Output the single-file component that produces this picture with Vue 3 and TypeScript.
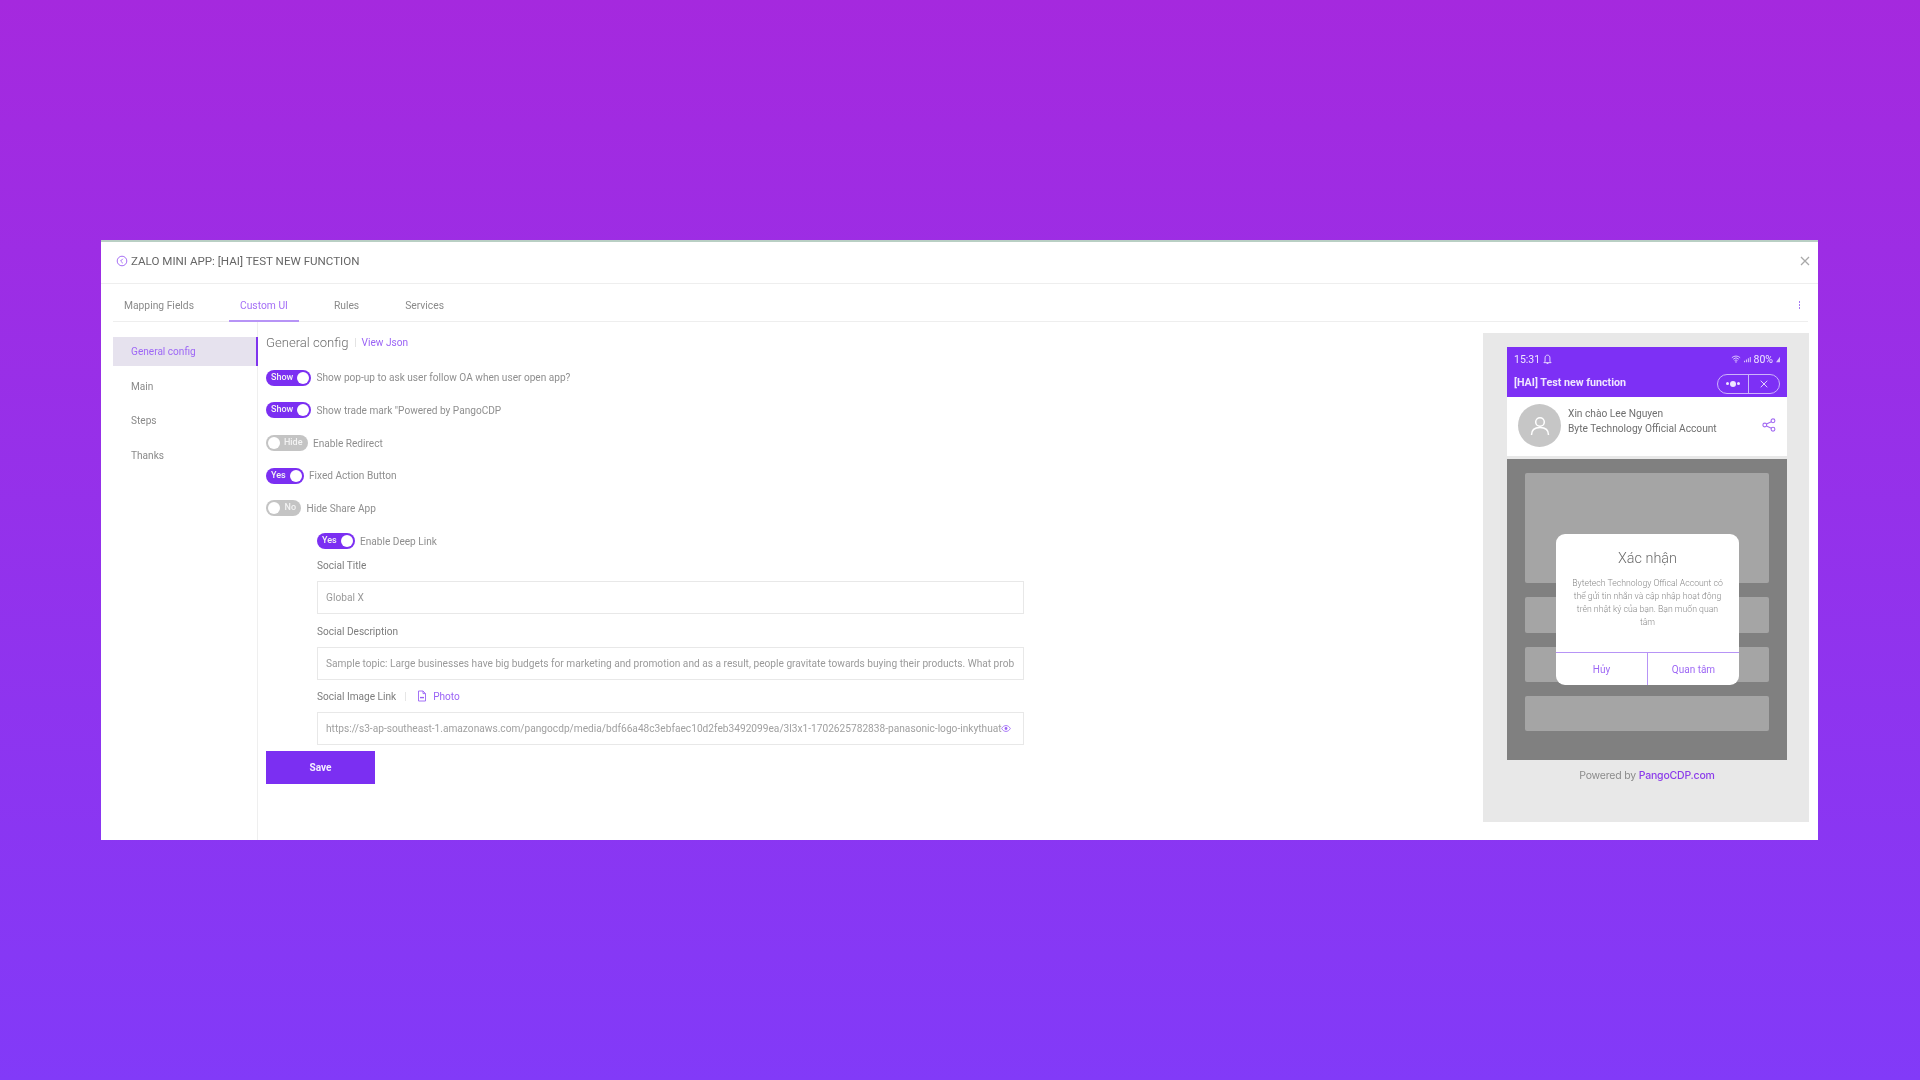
<script setup lang="ts">
interface ToggleRow {
  state: string
  on: boolean
  label: string
  width: number
}

const tabs: string[] = ['Mapping Fields', 'Custom UI', 'Rules', 'Services']
const menu: string[] = ['General config', 'Main', 'Steps', 'Thanks']
const rows: ToggleRow[] = [
  { state: 'Show', on: true, label: 'Show pop-up to ask user follow OA when user open app?', width: 45 },
  { state: 'Show', on: true, label: 'Show trade mark "Powered by PangoCDP', width: 45 },
  { state: 'Hide', on: false, label: 'Enable Redirect', width: 41.5 },
  { state: 'Yes', on: true, label: 'Fixed Action Button', width: 37.5 },
  { state: 'No', on: false, label: 'Hide Share App', width: 35 },
]
const blocks: number[] = [110, 36, 35, 35]
</script>

<template>
  <div class="page">
    <section class="window">
      <header class="head">
        <svg class="back" viewBox="0 0 12 12" width="12" height="12">
          <circle cx="6" cy="6" r="4.8" fill="none" stroke="#a66ff5" stroke-width="1" />
          <path d="M6.8 3.8 4.6 6l2.2 2.2" fill="none" stroke="#a66ff5" stroke-width="1" />
        </svg>
        <span class="title">ZALO MINI APP: [HAI] TEST NEW FUNCTION</span>
        <svg class="close" viewBox="0 0 10 10" width="10" height="10">
          <path d="M1 1l8 8M9 1l-8 8" stroke="#a9a9a9" stroke-width="1.3" />
        </svg>
      </header>

      <nav class="tabs">
        <span v-for="(t, i) in tabs" :key="t" class="tab" :class="{ active: i === 1 }">{{ t }}</span>
        <span class="kebab"><i></i><i></i><i></i></span>
      </nav>

      <div class="body">
        <aside class="side">
          <div v-for="(m, i) in menu" :key="m" class="side-item" :class="{ active: i === 0 }">{{ m }}</div>
        </aside>

        <main class="main">
          <div class="heading">
            <span class="h-title">General config</span>
            <span class="h-sep"></span>
            <span class="link">View Json</span>
          </div>

          <div v-for="r in rows" :key="r.label" class="row">
            <span class="toggle" :class="{ on: r.on }" :style="{ width: r.width + 'px' }">
              <span class="toggle-text">{{ r.state }}</span>
              <span class="knob"></span>
            </span>
            <span class="row-label">{{ r.label }}</span>
          </div>

          <div class="nested">
            <div class="row deep">
              <span class="toggle on deep-toggle">
                <span class="toggle-text">Yes</span>
                <span class="knob"></span>
              </span>
              <span class="row-label">Enable Deep Link</span>
            </div>

            <div class="f-label first">Social Title</div>
            <div class="input">Global X</div>

            <div class="f-label">Social Description</div>
            <div class="input">Sample topic: Large businesses have big budgets for marketing and promotion and as a result, people gravitate towards buying their products. What prob</div>

            <div class="f-label with-link">
              <span>Social Image Link</span>
              <span class="f-sep"></span>
              <svg viewBox="0 0 10 12" width="10" height="12">
                <path d="M1.5 1h4.5l2.5 2.6V11h-7z M6 1v2.6h2.5" fill="none" stroke="#9a63f5" stroke-width=".9" />
                <path d="M3 7.6h4" stroke="#9a63f5" stroke-width="1.4" />
              </svg>
              <span class="link photo">Photo</span>
            </div>
            <div class="input url">
              <span class="url-text">https://s3-ap-southeast-1.amazonaws.com/pangocdp/media/bdf66a48c3ebfaec10d2feb3492099ea/3l3x1-1702625782838-panasonic-logo-inkythuat</span>
              <svg class="eye" viewBox="0 0 12 10" width="10" height="9">
                <path d="M.8 5C2.2 2.6 4 1.5 6 1.5S9.8 2.6 11.200 5C9.800 7.400 8 8.500 6 8.500S2.200 7.400.8 5z" fill="none" stroke="#9a63f5" stroke-width="1" />
                <circle cx="6" cy="5" r="1.700" fill="#9a63f5" />
              </svg>
            </div>
          </div>

          <button class="save" type="button">Save</button>
        </main>

        <aside class="preview">
          <div class="phone">
            <div class="bar">
              <div class="status">
                <span>15:31</span>
                <svg viewBox="0 0 10 12" width="9" height="11">
                  <path d="M5 1.200C3.200 1.200 2.300 2.500 2.300 4.200V8L1 9.500h8L7.700 8V4.200C7.700 2.500 6.800 1.200 5 1.200zM4 10.500h2" fill="none" stroke="#efe6ff" stroke-width="1" />
                </svg>
                <span class="spacer"></span>
                <svg viewBox="0 0 12 10" width="10" height="8">
                  <path d="M.8 3.400a7.500 7.500 0 0 1 10.400 0M2.500 5.200a5 5 0 0 1 7 0M4.200 7a2.600 2.600 0 0 1 3.600 0" fill="none" stroke="#efe6ff" stroke-width="1" />
                  <circle cx="6" cy="8.600" r=".9" fill="#efe6ff" />
                </svg>
                <svg viewBox="0 0 8 8" width="7" height="7">
                  <path d="M0 7h1.200V5.500H0zM2.200 7h1.200V4H2.200zM4.400 7h1.200V2.500H4.400zM6.600 7h1.200V1H6.600z" fill="#d9c6fb" />
                </svg>
                <span>80%</span>
                <svg viewBox="0 0 6 8" width="4" height="7">
                  <path d="M6 0v8H0z" fill="#d9c6fb" />
                </svg>
              </div>
              <div class="bar-title">
                <span class="app-name">[HAI] Test new function</span>
                <span class="capsule">
                  <span class="cap-cell dots"><i class="s"></i><i class="b"></i><i class="s"></i></span>
                  <span class="cap-cell">
                    <svg viewBox="0 0 9 9" width="8" height="8"><path d="M.8.8l7.400 7.400M8.200.8.800 8.200" stroke="#efe6ff" stroke-width="1" /></svg>
                  </span>
                </span>
              </div>
            </div>

            <div class="account">
              <span class="avatar">
                <svg viewBox="0 0 24 24" width="24" height="24">
                  <circle cx="12" cy="8" r="4.300" fill="none" stroke="#fff" stroke-width="1.500" />
                  <path d="M3.500 21c0-5 3.600-7.500 8.500-7.500s8.500 2.500 8.500 7.500" fill="none" stroke="#fff" stroke-width="1.500" />
                </svg>
              </span>
              <div class="acc-text">
                <div>Xin chào Lee Nguyen</div>
                <div>Byte Technology Official Account</div>
              </div>
              <svg class="share" viewBox="0 0 14 14" width="14" height="14">
                <circle cx="11" cy="2.800" r="1.900" fill="none" stroke="#a36bf2" stroke-width="1.100" />
                <circle cx="2.800" cy="7" r="1.900" fill="none" stroke="#a36bf2" stroke-width="1.100" />
                <circle cx="11" cy="11.200" r="1.900" fill="none" stroke="#a36bf2" stroke-width="1.100" />
                <path d="M4.500 6.100 9.300 3.700M4.500 7.900l4.800 2.400" stroke="#a36bf2" stroke-width="1.100" />
              </svg>
            </div>

            <div class="screen">
              <div v-for="(h, i) in blocks" :key="i" class="block" :style="{ height: h + 'px' }"></div>
              <div class="dialog">
                <div class="d-body">
                  <div class="d-title">Xác nhận</div>
                  <p class="d-text">Bytetech Technology Offical Account có thể gửi tin nhắn và cập nhập hoạt động trên nhật ký của bạn. Bạn muốn quan tâm</p>
                </div>
                <div class="d-actions">
                  <span class="d-btn">Hủy</span>
                  <span class="d-btn">Quan tâm</span>
                </div>
              </div>
            </div>
          </div>
          <div class="powered">Powered by <b>PangoCDP.com</b></div>
        </aside>
      </div>
    </section>
  </div>
</template>

<style scoped>
.page {
  width: 1920px;
  height: 1080px;
  display: flex;
  align-items: center;
  justify-content: center;
  padding-right: 1px;
  box-sizing: border-box;
  background: linear-gradient(180deg, #a529de 0%, #823af8 100%);
  font-family: Roboto, "Liberation Sans", sans-serif;
  overflow: hidden;
}
.window {
  width: 1717px;
  height: 600px;
  background: #fff;
  border-top: 2px solid #b9cfc4;
  display: flex;
  flex-direction: column;
  box-sizing: border-box;
  filter: blur(0.5px);
  color: #777;
}
.head {
  height: 38px;
  flex: none;
  display: flex;
  align-items: center;
  padding: 0 8px 3px 15px;
  gap: 3px;
  border-bottom: 1px solid #eeeeee;
}
.title {
  font-size: 11.600px;
  color: #666;
}
.close { margin-left: auto; }
.tabs {
  height: 32px;
  padding-top: 5px;
  flex: none;
  display: flex;
  align-items: stretch;
  gap: 24px;
  margin: 0 10px 0 12px;
  border-bottom: 1px solid #eeeeee;
  position: relative;
}
.tab {
  font-size: 10.300px;
  padding: 0 11px;
  display: flex;
  align-items: center;
  color: #8a8a8a;
}
.tab.active {
  color: #a46ff6;
  box-shadow: 0 1px 0 #b794f6, inset 0 -1px 0 #b794f6;
}
.kebab {
  margin-left: auto;
  margin-right: 8px;
  display: flex;
  flex-direction: column;
  justify-content: center;
  gap: 1.500px;
}
.kebab i {
  width: 1.500px;
  height: 1.500px;
  background: #a77bf3;
  display: block;
}
.body {
  flex: 1;
  display: flex;
  min-height: 0;
}
.side {
  width: 144px;
  margin-left: 12px;
  flex: none;
  padding-top: 15px;
  border-right: 1px solid #efefef;
}
.side-item {
  height: 34.700px;
  padding-left: 18px;
  font-size: 10.100px;
  line-height: 30px;
  color: #8a8a8a;
  box-sizing: border-box;
}
.side-item.active {
  height: 29px;
  margin-bottom: 5.700px;
  margin-right: -1px;
  background: #e6e2ee;
  color: #9e68f5;
  border-right: 2px solid #7f35ee;
}
.main {
  width: 1216px;
  flex: none;
  padding: 11px 0 0 8px;
  box-sizing: border-box;
}
.heading {
  height: 18px;
  display: flex;
  align-items: center;
  margin-bottom: 10.500px;
}
.h-title {
  font-size: 13.100px;
  font-weight: 300;
  color: #6f6f6f;
}
.h-sep {
  width: 1px;
  height: 9px;
  background: #e3e3e3;
  margin: 0 6px;
}
.link {
  color: #9a63f5;
  font-size: 10.100px;
}
.row {
  height: 32.670px;
  display: flex;
  align-items: center;
  gap: 5.500px;
}
.row-label {
  font-size: 10.100px;
  color: #8f8f8f;
}
.toggle {
  height: 16px;
  border-radius: 8px;
  background: #c4c4c4;
  position: relative;
  flex: none;
  display: block;
}
.toggle.on { background: #7b2ff2; }
.deep-toggle { width: 37.500px; }
.toggle-text {
  position: absolute;
  top: 0;
  right: 5px;
  line-height: 15px;
  font-size: 9px;
  font-weight: 500;
  color: #f3f3f3;
}
.toggle.on .toggle-text {
  left: 5px;
  right: auto;
}
.knob {
  position: absolute;
  top: 2px;
  left: 2px;
  width: 12px;
  height: 12px;
  border-radius: 50%;
  background: #fff;
}
.toggle.on .knob {
  left: auto;
  right: 2px;
}
.nested { padding-left: 51px; }
.deep { height: 33px; }
.f-label {
  font-size: 10.100px;
  color: #7d7d7d;
  height: 33px;
  line-height: 15px;
  padding-top: 10px;
  box-sizing: border-box;
}
.f-label.first {
  height: 23.500px;
  padding-top: 0;
}
.input {
  width: 707px;
  height: 33px;
  border: 1px solid #e8e8e8;
  box-sizing: border-box;
  font-size: 10.170px;
  line-height: 31px;
  padding: 0 8px;
  white-space: nowrap;
  overflow: hidden;
  color: #9a9a9a;
}
.f-label.with-link {
  display: flex;
  align-items: flex-start;
  height: 31.500px;
  padding-top: 9px;
}
.f-sep {
  width: 1px;
  height: 9px;
  background: #e6e6e6;
  margin: 3px 11px 0 9px;
}
.with-link svg { margin: 1px 6px 0 0; }
.photo { line-height: 15px; }
.url {
  position: relative;
  margin-bottom: 6.500px;
  color: #a0a0a0;
}
.url-text { display: block; }
.eye {
  position: absolute;
  right: 12px;
  top: 11px;
}
.save {
  display: block;
  width: 109px;
  height: 33px;
  background: #7b2ff2;
  border: 0;
  color: #f4efff;
  font: 700 10.100px Roboto, "Liberation Sans", sans-serif;
  padding: 0;
}
.preview {
  width: 326px;
  height: 489px;
  flex: none;
  margin: 11px 0 0 9px;
  background: #e8e8e8;
  padding: 14px 22px 0 24px;
  box-sizing: border-box;
}
.phone { width: 280px; }
.bar {
  height: 50px;
  background: #7d30f5;
  padding: 0 7px;
  box-sizing: border-box;
  color: #efe6ff;
}
.status {
  height: 24px;
  display: flex;
  align-items: center;
  gap: 3px;
  font-size: 10.500px;
}
.spacer { flex: 1; }
.bar-title {
  height: 26px;
  display: flex;
  align-items: center;
  justify-content: space-between;
}
.app-name {
  font-size: 10.700px;
  font-weight: 700;
  margin-top: -4px;
}
.capsule {
  width: 63px;
  height: 20px;
  border: 1px solid #cdb4fa;
  border-radius: 10px;
  box-sizing: border-box;
  display: flex;
  margin-top: -1px;
}
.cap-cell {
  flex: 1;
  display: flex;
  align-items: center;
  justify-content: center;
  gap: 1px;
}
.cap-cell:first-child {
  flex: 0 0 30px;
  border-right: 1px solid #cdb4fa;
}
.dots i {
  display: block;
  border-radius: 50%;
  background: #efe6ff;
}
.dots .s { width: 3px; height: 3px; }
.dots .b { width: 6px; height: 6px; }
.account {
  height: 59px;
  background: #fff;
  display: flex;
  align-items: center;
  padding: 0 11px 0 11px;
  gap: 7px;
}
.avatar {
  width: 43px;
  height: 43px;
  border-radius: 50%;
  background: #c6c6c6;
  display: flex;
  align-items: center;
  justify-content: center;
  flex: none;
  margin-top: -2px;
}
.acc-text {
  font-size: 10.200px;
  line-height: 15px;
  color: #6f6f6f;
  flex: 1;
  margin-top: -11px;
}
.share { margin-top: -3px; }
.screen {
  height: 301px;
  margin-top: 3px;
  background: #808080;
  padding: 14px 18px 0;
  box-sizing: border-box;
  display: flex;
  flex-direction: column;
  gap: 14px;
  position: relative;
}
.block {
  background: #a5a5a5;
  border-radius: 2px;
}
.dialog {
  position: absolute;
  left: 49px;
  top: 75px;
  width: 183px;
  height: 151px;
  background: #fff;
  border-radius: 9px;
  overflow: hidden;
  display: flex;
  flex-direction: column;
}
.d-body {
  flex: 1;
  padding: 16px 14px 0;
  text-align: center;
}
.d-title {
  font-size: 14.400px;
  font-weight: 300;
  color: #6b6b6b;
  line-height: 18px;
  margin-bottom: 9px;
}
.d-text {
  margin: 0;
  font-size: 8.700px;
  font-weight: 300;
  line-height: 13px;
  color: #8a8a8a;
}
.d-actions {
  height: 32px;
  display: flex;
  border-top: 1px solid #b794f6;
}
.d-btn {
  flex: 1;
  display: flex;
  align-items: center;
  justify-content: center;
  font-size: 10px;
  color: #9e68f5;
}
.d-btn + .d-btn { border-left: 1px solid #b794f6; }
.powered {
  text-align: center;
  margin-top: 9px;
  font-family: Inter, Roboto, sans-serif;
  font-size: 10.500px;
  line-height: 13px;
  letter-spacing: -.2px;
  color: #8b8b8b;
}
.powered b {
  font-weight: 500;
  color: #8b3bea;
}
</style>
